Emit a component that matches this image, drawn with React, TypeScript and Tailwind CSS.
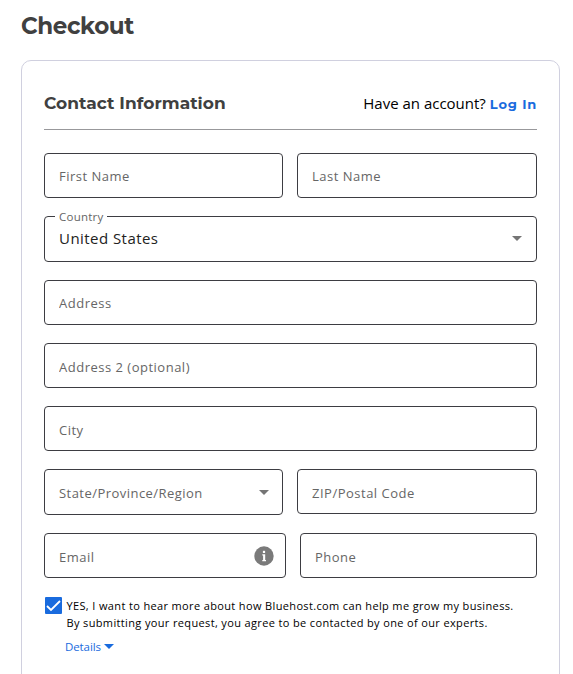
import React, { useState } from 'react';
import clsx from 'clsx';

interface TextFieldProps {
  name: string;
  label: string;
  className?: string;
  inputClassName?: string;
  children?: React.ReactNode;
}

function TextField({ name, label, className, inputClassName, children }: TextFieldProps) {
  return (
    <div className={clsx('flex h-[45px] rounded-[4px] border border-[#3d3d42] bg-white', className)}>
      <input
        name={name}
        aria-label={label}
        placeholder={label}
        className={clsx(
          'h-full w-full min-w-0 bg-transparent px-[14px] text-[13px] tracking-[0.5px] text-[#222] outline-none placeholder:text-[#666]',
          inputClassName
        )}
      />
      {children}
    </div>
  );
}

function Caret({ className }: { className?: string }) {
  return (
    <svg className={className} width="10" height="5" viewBox="0 0 10 5" fill="currentColor">
      <path d="M0 0h10L5 5z" />
    </svg>
  );
}

function InfoIcon() {
  return (
    <svg className="shrink-0" width="20" height="20" viewBox="0 0 20 20">
      <circle cx="10" cy="10" r="9.7" fill="#7a7a7a" />
      <rect x="8.9" y="4.8" width="2.2" height="2.2" fill="#fff" />
      <path d="M8.3 8.3h2.9v5.6h.8v1.3H8.3v-1.3h.8V9.6h-.8z" fill="#fff" />
    </svg>
  );
}

export default function App() {
  const [subscribed, setSubscribed] = useState(true);

  return (
    <div className="h-[674px] w-[573px] overflow-hidden bg-white pl-[21px] font-['Open_Sans','Noto_Sans',sans-serif] text-black">
      <h1 className="flex h-[60px] items-center pb-[8px] font-['Montserrat','Inter',sans-serif] text-[23px] font-bold tracking-[-0.4px] text-[#404040]">
        Checkout
      </h1>

      <form className="h-[660px] w-[539px] rounded-[10px] border border-[#d0d0df] px-[22px]">
        <div className="flex h-[69px] items-center justify-between border-b border-[#98989b] pt-[17px]">
          <h2 className="font-['Montserrat','Inter',sans-serif] text-[17px] font-bold tracking-[0.05px] text-[#404040]">
            Contact Information
          </h2>
          <p className="flex items-baseline gap-1 text-[15px]">
            Have an account?
            <a className="font-['Montserrat','Inter',sans-serif] text-[13px] font-bold tracking-[0.8px] text-[#196bde]">
              Log In
            </a>
          </p>
        </div>

        <div className="mt-[23px] flex flex-col gap-[18px]">
          <div className="flex gap-[14px]">
            <TextField name="firstName" label="First Name" className="w-[239px]" inputClassName="pt-px" />
            <TextField name="lastName" label="Last Name" className="w-[240px]" inputClassName="pt-px" />
          </div>

          <div className="relative flex h-[46px] items-center justify-between rounded-[4px] border border-[#3d3d42] px-[14px] pb-[2px] text-[15px] tracking-[0.45px] text-[#222]">
            <label className="absolute -top-[8px] left-[10px] bg-white pr-[3px] pl-1 text-[11.5px] leading-[16px] tracking-[0.25px] text-[#666]">
              Country
            </label>
            <span>United States</span>
            <Caret className="text-[#757575]" />
          </div>

          <TextField name="address" label="Address" inputClassName="pt-px" />
          <TextField name="address2" label="Address 2 (optional)" inputClassName="pt-[3px]" />
          <TextField name="city" label="City" inputClassName="pt-[3px]" />

          <div className="flex items-start gap-[14px]">
            <div className="flex h-[46px] w-[239px] items-center justify-between rounded-[4px] border border-[#3d3d42] pr-[13px] pl-[14px] text-[13px] tracking-[0.46px] text-[#666]">
              <span className="pt-[3px]">State/Province/Region</span>
              <Caret className="text-[#757575]" />
            </div>
            <TextField name="zip" label="ZIP/Postal Code" className="w-[240px]" inputClassName="pt-[3px]" />
          </div>

          <div className="flex gap-[14px]">
            <TextField name="email" label="Email" className="w-[242px] items-center pr-[11px]" inputClassName="pt-[3px]">
              <InfoIcon />
            </TextField>
            <TextField name="phone" label="Phone" className="w-[237px]" inputClassName="pt-[3px]" />
          </div>
        </div>

        <div className="mt-[19px] ml-px flex gap-[4.5px]">
          <button
            type="button"
            role="checkbox"
            aria-checked={subscribed}
            onClick={() => setSubscribed(!subscribed)}
            className="flex size-[17px] shrink-0 items-center justify-center rounded-[1px] bg-[#196bde]"
          >
            {subscribed && (
              <svg width="15" height="13" viewBox="0 0 15 13" fill="none" stroke="#fff" strokeWidth="1.8">
                <path d="M1 7l4 4L14 2" />
              </svg>
            )}
          </button>
          <p className="text-[11px] leading-[17px] whitespace-nowrap tracking-[0.36px]">
            YES, I want to hear more about how Bluehost.com can help me grow my business.
            <br />
            By submitting your request, you agree to be contacted by one of our experts.
          </p>
        </div>
        <button type="button" className="mt-[7px] ml-[21px] flex items-center gap-[3px] text-[11.5px] leading-[17px] tracking-[-0.1px] text-[#196bde]">
          Details
          <Caret />
        </button>
      </form>
    </div>
  );
}
